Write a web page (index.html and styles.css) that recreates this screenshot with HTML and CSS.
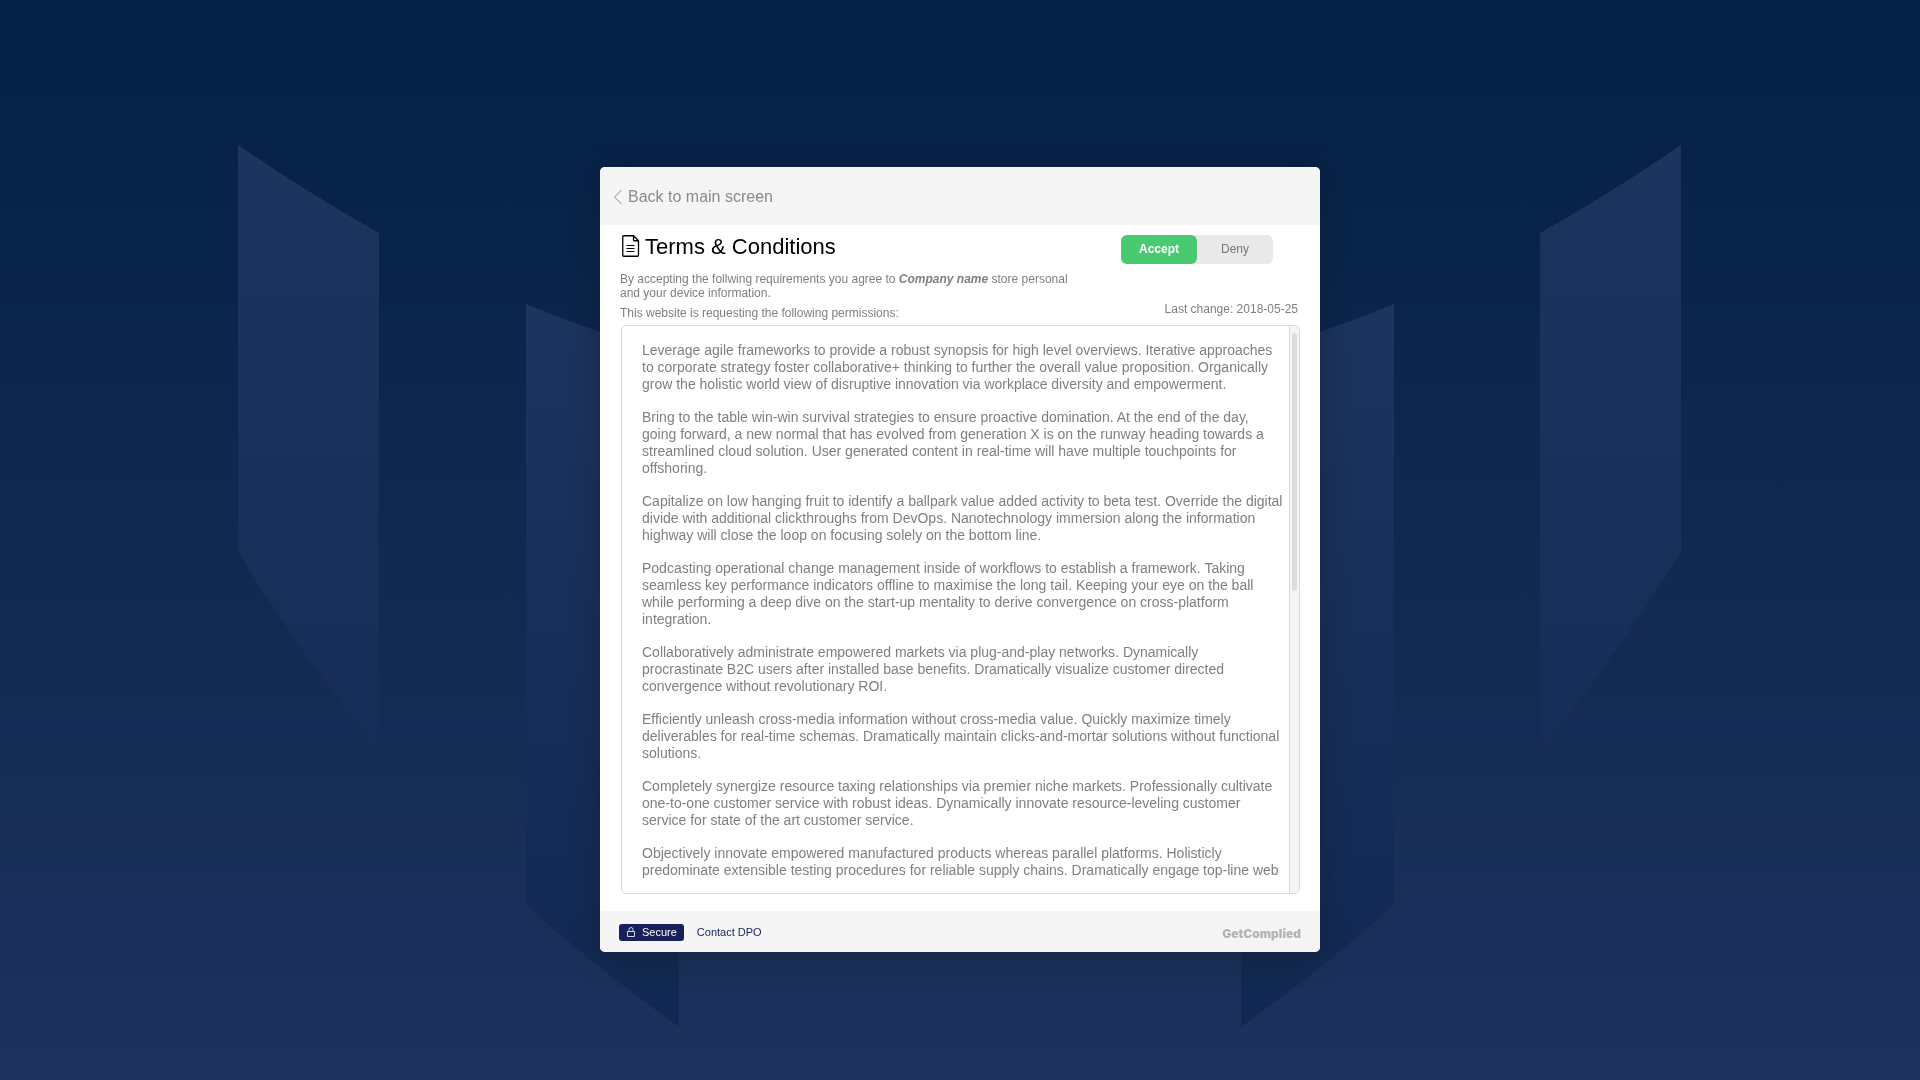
FILE: index.html
```html
<!DOCTYPE html>
<html lang="en">
<head>
<meta charset="utf-8">
<meta name="viewport" content="width=device-width, initial-scale=1">
<title>Terms &amp; Conditions</title>
<link rel="stylesheet" href="styles.css">
</head>
<body>
<svg class="backdrop" viewBox="0 0 1920 1080" preserveAspectRatio="xMidYMid slice" aria-hidden="true">
  <defs>
    <linearGradient id="outer" x1="0" y1="145" x2="0" y2="760" gradientUnits="userSpaceOnUse">
      <stop offset="0" stop-color="#1d345e"/>
      <stop offset="1" stop-color="#162d57"/>
    </linearGradient>
    <linearGradient id="inner" x1="0" y1="304" x2="0" y2="1027" gradientUnits="userSpaceOnUse">
      <stop offset="0" stop-color="#1d345e"/>
      <stop offset="1" stop-color="#112952"/>
    </linearGradient>
  </defs>
  <path fill="url(#outer)" d="M238 145Q308 193 379 233V752Q298 650 238 552Z"/>
  <path fill="url(#outer)" d="M1681 145Q1611 193 1540 233V752Q1621 650 1681 552Z"/>
  <path fill="url(#inner)" d="M526 304Q600 335 679 355V1027Q598 969 526 905Z"/>
  <path fill="url(#inner)" d="M1394 304Q1320 335 1241 355V1027Q1322 969 1394 905Z"/>
</svg>
<main class="page">
  <section class="card">
    <header class="card-header">
      <a class="back" href="#">
        <svg width="10" height="16" viewBox="0 0 10 16" fill="none" stroke="currentColor" aria-hidden="true"><path d="M8.500 1L1.500 8L8.500 15"/></svg>
        Back to main screen
      </a>
    </header>
    <div class="card-body">
      <div class="intro">
        <div class="intro-text">
          <h1 class="title">
            <svg width="18" height="22" viewBox="0 0 18 22" fill="none" stroke="currentColor" aria-hidden="true">
              <path stroke-width="1.300" d="M11.500 .75H1.750A1 1 0 0 0 .75 1.750V20.250A1 1 0 0 0 1.750 21.250H15.500A1 1 0 0 0 16.500 20.250V5.750ZM11.500 .75V4.750A1 1 0 0 0 12.500 5.750H16.500"/>
              <path stroke-width="1.200" d="M4.500 10.500H12.500M4.500 13.500H12.500M4.500 16.500H12.500"/>
            </svg>
            Terms &amp; Conditions
          </h1>
          <p class="note">By accepting the follwing requirements you agree to <em class="company">Company name</em> store personal and your device information.</p>
          <p class="note">This website is requesting the following permissions:</p>
        </div>
        <div class="intro-side">
          <div class="toggle" role="group" aria-label="Consent">
            <button class="choice choice-accept" type="button" aria-pressed="true">Accept</button>
            <button class="choice" type="button" aria-pressed="false">Deny</button>
          </div>
          <p class="changed">Last change: 2018-05-25</p>
        </div>
      </div>
      <div class="terms">
        <div class="terms-scroll" tabindex="0">
          <p>Leverage agile frameworks to provide a robust synopsis for high level overviews. Iterative approaches to corporate strategy foster collaborative+ thinking to further the overall value proposition. Organically grow the holistic world view of disruptive innovation via workplace diversity and empowerment.</p>
          <p>Bring to the table win-win survival strategies to ensure proactive domination. At the end of the day, going forward, a new normal that has evolved from generation X is on the runway heading towards a streamlined cloud solution. User generated content in real-time will have multiple touchpoints for offshoring.</p>
          <p>Capitalize on low hanging fruit to identify a ballpark value added activity to beta test. Override the digital divide with additional clickthroughs from DevOps. Nanotechnology immersion along the information highway will close the loop on focusing solely on the bottom line.</p>
          <p>Podcasting operational change management inside of workflows to establish a framework. Taking seamless key performance indicators offline to maximise the long tail. Keeping your eye on the ball while performing a deep dive on the start-up mentality to derive convergence on cross-platform integration.</p>
          <p>Collaboratively administrate empowered markets via plug-and-play networks. Dynamically procrastinate B2C users after installed base benefits. Dramatically visualize customer directed convergence without revolutionary ROI.</p>
          <p>Efficiently unleash cross-media information without cross-media value. Quickly maximize timely deliverables for real-time schemas. Dramatically maintain clicks-and-mortar solutions without functional solutions.</p>
          <p>Completely synergize resource taxing relationships via premier niche markets. Professionally cultivate one-to-one customer service with robust ideas. Dynamically innovate resource-leveling customer service for state of the art customer service.</p>
          <p>Objectively innovate empowered manufactured products whereas parallel platforms. Holisticly predominate extensible testing procedures for reliable supply chains. Dramatically engage top-line web</p>
        </div>
        <div class="track" aria-hidden="true"><div class="thumb"></div></div>
      </div>
    </div>
    <footer class="card-footer">
      <span class="secure">
        <svg width="8" height="10" viewBox="0 0 8 10" fill="none" stroke="currentColor" stroke-width=".8" aria-hidden="true"><path d="M.5 4.500H7.500V9.500H.5ZM2 4.500V2.500A2 2 0 0 1 6 2.500V4.500"/></svg>
        Secure
      </span>
      <a class="contact" href="#">Contact DPO</a>
      <span class="brand">GetComplied</span>
    </footer>
  </section>
</main>
</body>
</html>
```
FILE: styles.css
```css
* {
  box-sizing: border-box;
}

body {
  margin: 0;
  background: linear-gradient(#032045, #1d325d) fixed;
  color: #7f7f7f;
  font-family: "Liberation Sans", Arial, Helvetica, sans-serif;
  font-size: 12px;
  line-height: 14px;
}

h1,
p {
  margin: 0;
}

a {
  text-decoration: none;
}

.backdrop {
  position: fixed;
  inset: 0;
  width: 100%;
  height: 100%;
}

.page {
  position: relative;
  display: flex;
  align-items: center;
  justify-content: center;
  min-height: 100vh;
  padding-top: 38px;
}

.card {
  width: 100%;
  max-width: 720px;
  overflow: hidden;
  border-radius: 5px;
  background: #fff;
  box-shadow: 0 4px 28px rgba(20, 20, 20, 0.35);
}

.card-header {
  padding: 21px 13px 19px;
  background: #f5f5f5;
}

.back {
  display: inline-flex;
  align-items: center;
  gap: 5px;
  color: #8a8a8a;
  font-size: 16px;
  line-height: 18px;
  vertical-align: top;
}

.card-body {
  padding: 9px 20px 17px;
}

.intro {
  display: flex;
  justify-content: space-between;
  margin-bottom: 5px;
}

.intro-text {
  flex: 0 1 460px;
}

.title {
  display: flex;
  align-items: center;
  gap: 5px;
  margin-bottom: 12px;
  padding-left: 2px;
  color: #000;
  font-size: 22px;
  font-weight: 400;
  line-height: 26px;
}

.title svg {
  margin-bottom: 2px;
}

.note + .note {
  margin-top: 6px;
}

.company {
  font-weight: 700;
}

.intro-side {
  display: flex;
  flex-direction: column;
  justify-content: space-between;
  padding: 1px 2px 4px 0;
}

.toggle {
  display: flex;
  margin-right: 25px;
  border-radius: 6px;
  background: #e9e9e9;
}

.changed {
  text-align: right;
}

.choice {
  width: 76px;
  height: 29px;
  padding: 0;
  border: 0;
  border-radius: 6px;
  background: transparent;
  color: #777;
  font: inherit;
}

.choice-accept {
  background: #48ca70;
  color: #fff;
  font-weight: 700;
}

.terms {
  display: flex;
  height: 569px;
  margin-left: 1px;
  overflow: hidden;
  border: 1px solid #dadada;
  border-radius: 5px;
}

.terms-scroll {
  flex: 1;
  padding: 16px 6px 0 20px;
  overflow-y: auto;
  scrollbar-width: none;
  font-size: 14px;
  line-height: 17px;
}

.terms-scroll p + p {
  margin-top: 16px;
}

.track {
  width: 10px;
  padding: 7px 2px;
  border-left: 1px solid #dadada;
  background: #f5f5f5;
}

.thumb {
  height: 258px;
  border-radius: 3px;
  background: #dcdcdc;
}

.card-footer {
  display: flex;
  align-items: center;
  gap: 13px;
  padding: 13px 19px 11px;
  background: #f5f5f5;
  font-size: 11px;
  line-height: 17px;
}

.secure {
  display: flex;
  align-items: center;
  gap: 7px;
  padding: 0 7px 0 8px;
  border-radius: 3px;
  background: #17205a;
  color: #fff;
}

.contact {
  color: #17205a;
}

.brand {
  margin-left: auto;
  padding-top: 2px;
  color: #b4b4b4;
  font-family: Inter, sans-serif;
  font-size: 12px;
  font-weight: 900;
  line-height: 15px;
}
```
